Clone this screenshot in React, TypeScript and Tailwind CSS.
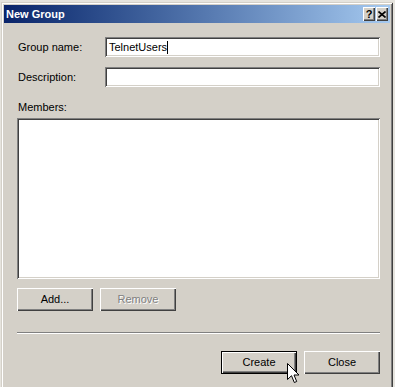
import React from "react";

const raised =
  "shadow-[inset_1px_1px_0_#ffffff,inset_-1px_-1px_0_#404040,inset_-2px_-2px_0_#808080]";
const sunken =
  "shadow-[inset_1px_1px_0_#808080,inset_-1px_-1px_0_#ffffff,inset_2px_2px_0_#404040,inset_-2px_-2px_0_#d4d0c8]";

function Field({ label, value }: { label: string; value?: string }) {
  return (
    <div className="flex items-center h-[20px]">
      <span className="w-[88px] pl-px">{label}</span>
      <div className={`w-[275px] h-[20px] bg-white flex items-center pl-[4px] ${sunken}`}>
        {value && (
          <>
            <span>{value}</span>
            <span className="w-px h-[13px] bg-black" />
          </>
        )}
      </div>
    </div>
  );
}

function Button({ children, disabled, isDefault }: { children: React.ReactNode; disabled?: boolean; isDefault?: boolean }) {
  return (
    <button
      className={`w-[76px] h-[23px] bg-[#d4d0c8] flex items-center justify-center ${
        isDefault ? "border border-black" : ""
      } ${raised} ${disabled ? "text-[#808080] [text-shadow:1px_1px_0_#ffffff]" : "text-black"}`}
    >
      {children}
    </button>
  );
}

function CaptionButton({ children }: { children: React.ReactNode }) {
  return (
    <div className={`w-[12px] h-[14px] bg-[#d4d0c8] flex items-center justify-center text-[11px] font-bold leading-none text-black ${raised}`}>
      {children}
    </div>
  );
}

export default function App() {
  return (
    <div className="w-[395px] h-[387px] overflow-hidden bg-[#e6e4de] pt-[2px] pl-[1px] font-['Liberation_Sans',Arial,sans-serif] text-[11px] text-black">
      <div className="relative w-[392px] h-[400px] bg-[#d4d0c8] p-[3px] pt-[3px] shadow-[inset_1px_1px_0_#d4d0c8,inset_-1px_-1px_0_#404040,inset_2px_2px_0_#ffffff,inset_-2px_-2px_0_#808080]">
        <div className="h-[18px] flex items-center justify-between pl-[2px] pr-[2px] bg-gradient-to-r from-[#0a246a] to-[#a6caf0]">
          <span className="text-white font-bold text-[11px]">New Group</span>
          <div className="flex gap-[1px]">
            <CaptionButton>?</CaptionButton>
            <CaptionButton>
              <svg width="8" height="7" viewBox="0 0 8 7">
                <path d="M0.5 0.5 L7.5 6.5 M7.5 0.5 L0.5 6.5" stroke="#000" strokeWidth="1.6" />
              </svg>
            </CaptionButton>
          </div>
        </div>

        <div className="pl-[13px] w-[376px]">
          <div className="mt-[14px] flex flex-col gap-[10px]">
            <Field label="Group name:" value="TelnetUsers" />
            <Field label="Description:" />
          </div>
          <div className="mt-[14px] pl-px leading-[13px]">Members:</div>
          <div className={`mt-[4px] w-[363px] h-[161px] bg-white ${sunken}`} />
          <div className="mt-[9px] flex gap-[7px]">
            <Button>Add...</Button>
            <Button disabled>Remove</Button>
          </div>
          <div className="mt-[21px] w-[363px] h-[2px] border-t border-t-[#808080] border-b border-b-white" />
          <div className="mt-[17px] w-[363px] flex justify-end gap-[7px]">
            <Button isDefault>Create</Button>
            <Button>Close</Button>
          </div>
        </div>

        <svg className="absolute left-[286px] top-[361px]" width="13" height="22" viewBox="0 0 13 22">
          <path d="M0.5 0.5 L0.5 16.5 L4.5 12.7 L7.3 19.5 L9.7 18.5 L7 12 L12 12 Z" fill="#fff" stroke="#000" strokeWidth="1" />
        </svg>
      </div>
    </div>
  );
}
